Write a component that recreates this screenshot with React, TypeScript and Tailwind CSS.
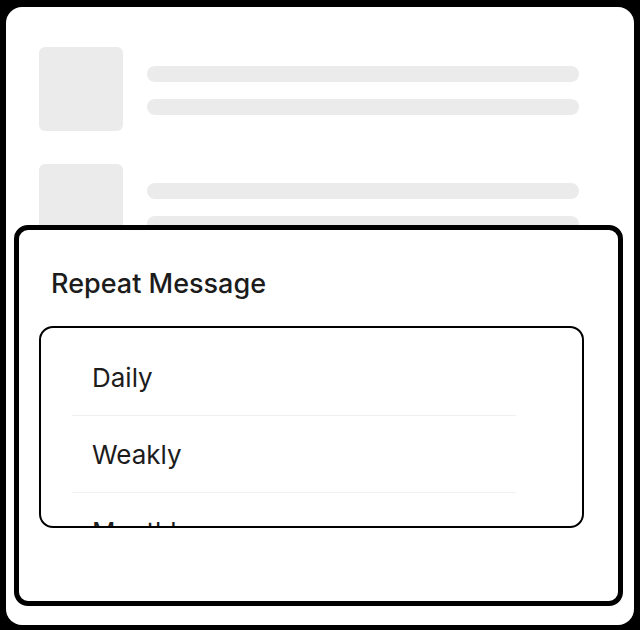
import React from 'react';

const options = ['Daily', 'Weakly', 'Monthly'];

function SkeletonRow() {
  return (
    <div className="flex gap-6">
      <div className="h-[84px] w-[84px] shrink-0 rounded-md bg-[#ebebeb]" />
      <div className="flex flex-1 flex-col gap-[17px] pt-[19px]">
        <div className="h-4 rounded-full bg-[#ebebeb]" />
        <div className="h-4 rounded-full bg-[#ebebeb]" />
      </div>
    </div>
  );
}

export default function App() {
  return (
    <div className="h-[630px] w-[640px] bg-black pt-[7px] pr-[6px] pb-[5px] pl-[6px] font-['Inter',sans-serif]">
      <div className="relative h-full overflow-hidden rounded-2xl bg-white">
        {/* background list placeholder */}
        <div className="flex flex-col gap-[33px] pt-[40px] pr-[55px] pl-[33px]">
          <SkeletonRow />
          <SkeletonRow />
        </div>

        {/* bottom sheet */}
        <div className="absolute top-[218px] right-[11px] bottom-[19px] left-[8px] rounded-[14px] border-[5px] border-black bg-white">
          <h2 className="pt-[38px] pl-[32px] text-[27px] leading-[32px] font-medium text-[#1c1c1c]">Repeat Message</h2>

          <div className="mt-[26px] mr-[34px] ml-[20px] h-[202px] overflow-hidden rounded-[14px] border-2 border-black">
            <ul className="pt-[11px]">
              {options.map((o) => (
                <li
                  key={o}
                  className="mr-[66px] ml-[31px] flex h-[77px] items-center border-b border-[#f0f0f0] pl-[20px] text-[26px] text-[#1c1c1c]"
                >
                  {o}
                </li>
              ))}
            </ul>
          </div>
        </div>
      </div>
    </div>
  );
}
